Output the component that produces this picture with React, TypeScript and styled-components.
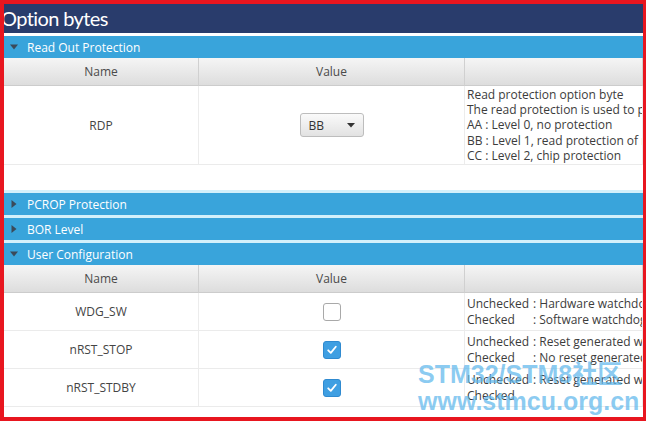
import React from 'react'
import styled, {createGlobalStyle} from 'styled-components'

const GlobalStyle = createGlobalStyle`
  html, body {
    margin: 0;
    padding: 0;
    background: #ffffff;
  }
  body {
    font-family: "Open Sans", "Noto Sans", sans-serif;
  }
`

const Frame = styled.div`
  position: relative;
  box-sizing: border-box;
  width: 646px;
  height: 421px;
  border: 4px solid #e8161f;
  border-right-width: 3px;
  background: #ffffff;
  overflow: hidden;
`

const TitleBar = styled.div`
  height: 29px;
  background: #293c6c;
  color: #ffffff;
  font-family: Lato, "Open Sans", sans-serif;
  font-size: 20px;
  line-height: 29px;
  text-indent: -3px;
  letter-spacing: -0.6px;
  white-space: nowrap;
`

const Bar = styled.div<{$first?: boolean}>`
  display: flex;
  align-items: center;
  gap: 9px;
  height: 22px;
  margin-top: ${p => (p.$first ? '3px' : '0')};
  border-top: ${p => (p.$first ? 'none' : '3px solid #d3f0fb')};
  background: #39a4db;
  padding-left: 6px;
  color: #ffffff;
  font-size: 12px;
  white-space: nowrap;
`

const Caret = styled.svg`
  width: 8px;
  height: 8px;
  flex: none;
`

const Spacer = styled.div<{$h: number}>`
  height: ${p => p.$h}px;
`

const Table = styled.div`
  display: grid;
  grid-template-columns: 195px 266px 1fr;
`

const HeadCell = styled.div`
  height: 27px;
  display: flex;
  align-items: center;
  justify-content: center;
  background: linear-gradient(#f5f5f5, #dddddd);
  border-bottom: 1px solid #cccccc;
  border-right: 1px solid #d0d0d0;
  color: #4a4a4a;
  font-size: 12px;
`

const Cell = styled.div<{$h: number; $align?: 'center' | 'start'}>`
  box-sizing: border-box;
  height: ${p => p.$h}px;
  display: flex;
  align-items: center;
  justify-content: ${p => (p.$align === 'start' ? 'flex-start' : 'center')};
  border-bottom: 1px solid #ebebeb;
  border-right: 1px solid #ececec;
  background: #ffffff;
  color: #444444;
  font-size: 12px;
  white-space: nowrap;
  overflow: hidden;
`

const Desc = styled.div`
  padding-left: 2px;
  line-height: 15.3px;
  color: #3c3c3c;
  font-size: 12px;
`

const Label = styled.span`
  display: inline-block;
  width: 66px;
`

const Combo = styled.div`
  box-sizing: border-box;
  width: 64px;
  height: 24px;
  display: flex;
  align-items: center;
  justify-content: space-between;
  padding: 0 8px;
  border: 1px solid #bdbdbd;
  border-radius: 3px;
  background: linear-gradient(#fafafa, #e2e2e2);
  color: #333333;
  font-size: 12px;
`

const Box = styled.div<{$on: boolean}>`
  box-sizing: border-box;
  width: 18px;
  height: 18px;
  border-radius: 3px;
  border: 1.5px solid ${p => (p.$on ? '#2f8ad0' : '#a9a9a9')};
  background: ${p => (p.$on ? '#3f9fe2' : '#ffffff')};
  display: flex;
  align-items: center;
  justify-content: center;
`

const Watermark = styled.div`
  position: absolute;
  left: 414px;
  top: 357px;
  font-family: "Liberation Sans", "Noto Sans CJK SC", sans-serif;
  font-weight: bold;
  color: rgba(96, 184, 236, 0.72);
  line-height: 27px;
  white-space: nowrap;
  pointer-events: none;
`

const MarkLine = styled.div<{$size: number}>`
  font-size: ${p => p.$size}px;
`

const CaretIcon = ({open}: {open: boolean}) => (
  <Caret viewBox="0 0 8 8">
    {open ? (
      <path d="M0 1.5 L8 1.5 L4 6.5 Z" fill="#3b4a5a" />
    ) : (
      <path d="M1.5 0 L6.5 4 L1.5 8 Z" fill="#3b4a5a" />
    )}
  </Caret>
)

const Section = ({title, open, first}: {title: string; open: boolean; first?: boolean}) => (
  <Bar $first={first}>
    <CaretIcon open={open} />
    {title}
  </Bar>
)

const Check = ({on}: {on: boolean}) => (
  <Box $on={on}>
    {on && (
      <svg width="12" height="12" viewBox="0 0 12 12">
        <path d="M2.2 6.3 L4.8 8.9 L9.8 2.8" fill="none" stroke="#ffffff" strokeWidth="1.8" strokeLinecap="round" strokeLinejoin="round" />
      </svg>
    )}
  </Box>
)

const userRows = [
  {name: 'WDG_SW', on: false, a: 'Hardware watchdog', b: 'Software watchdog'},
  {name: 'nRST_STOP', on: true, a: 'Reset generated when entering Stop mode', b: 'No reset generated'},
  {name: 'nRST_STDBY', on: true, a: 'Reset generated when entering Standby mode', b: ''},
]

const App = () => {
  return (
    <>
      <GlobalStyle />
      <Frame>
        <TitleBar>Option bytes</TitleBar>
        <Section title="Read Out Protection" open first />
        <Table>
          <HeadCell>Name</HeadCell>
          <HeadCell>Value</HeadCell>
          <HeadCell />
          <Cell $h={79}>RDP</Cell>
          <Cell $h={79}>
            <Combo>
              BB
              <svg width="8" height="5" viewBox="0 0 8 5">
                <path d="M0 0 L8 0 L4 4.5 Z" fill="#333333" />
              </svg>
            </Combo>
          </Cell>
          <Cell $h={79} $align="start">
            <Desc>
              Read protection option byte
              <br />
              The read protection is used to protect the software code
              <br />
              AA : Level 0, no protection
              <br />
              BB : Level 1, read protection of memories
              <br />
              CC : Level 2, chip protection
            </Desc>
          </Cell>
        </Table>
        <Spacer $h={25} />
        <Section title="PCROP Protection" open={false} />
        <Section title="BOR Level" open={false} />
        <Section title="User Configuration" open />
        <Table>
          <HeadCell>Name</HeadCell>
          <HeadCell>Value</HeadCell>
          <HeadCell />
          {userRows.map(r => (
            <React.Fragment key={r.name}>
              <Cell $h={38}>{r.name}</Cell>
              <Cell $h={38}>
                <Check on={r.on} />
              </Cell>
              <Cell $h={38} $align="start">
                <Desc>
                  <Label>Unchecked</Label>: {r.a}
                  <br />
                  <Label>Checked</Label>
                  {r.b ? `: ${r.b}` : ''}
                </Desc>
              </Cell>
            </React.Fragment>
          ))}
        </Table>
        <Watermark>
          <MarkLine $size={25}>STM32/STM8社区</MarkLine>
          <MarkLine $size={25}>www.stmcu.org.cn</MarkLine>
        </Watermark>
      </Frame>
    </>
  )
}

export default App
